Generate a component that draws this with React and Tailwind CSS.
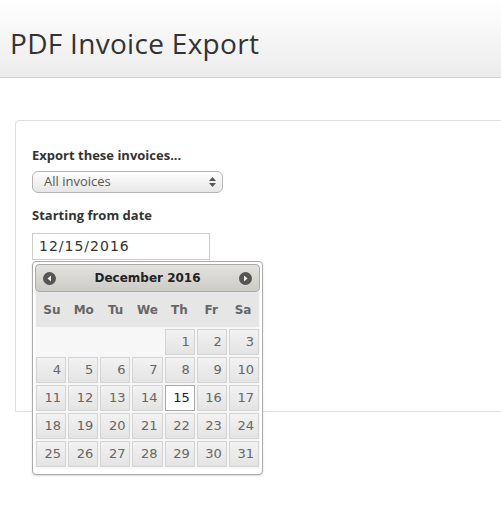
const weeks = [
  [null, null, null, null, 1, 2, 3],
  [4, 5, 6, 7, 8, 9, 10],
  [11, 12, 13, 14, 15, 16, 17],
  [18, 19, 20, 21, 22, 23, 24],
  [25, 26, 27, 28, 29, 30, 31],
];
const dayNames = ["Su", "Mo", "Tu", "We", "Th", "Fr", "Sa"];

function NavIcon({ dir }) {
  return (
    <svg width="13" height="13" viewBox="0 0 13 13">
      <circle cx="6.5" cy="6.5" r="6.5" fill="#555" />
      {dir === "prev" ? (
        <path d="M8 3.5 L4.5 6.5 L8 9.5 Z" fill="#eee" />
      ) : (
        <path d="M5 3.5 L8.5 6.5 L5 9.5 Z" fill="#eee" />
      )}
    </svg>
  );
}

function DatePicker() {
  return (
    <div className="absolute left-0 top-[28px] w-[231px] rounded-[4px] border border-[#aaa] bg-white p-[2px] pb-[5px] font-['DejaVu_Sans',Verdana,sans-serif] shadow-[0_1px_2px_rgba(0,0,0,0.15)]">
      <div className="flex h-[28px] items-center justify-between rounded-[4px] border border-[#aaa] bg-gradient-to-b from-[#e4e2de] to-[#cdcbc6] px-[7px]">
        <NavIcon dir="prev" />
        <span className="text-[12px] font-bold text-[#222]">December 2016</span>
        <NavIcon dir="next" />
      </div>
      <div className="bg-[#f7f7f7] px-[1px] pb-[2px]">
        <div className="grid h-[35px] grid-cols-7 items-center bg-[#e6e6e6] text-center text-[12px] font-bold text-[#666]">
          {dayNames.map((d) => (
            <span key={d}>{d}</span>
          ))}
        </div>
        <div className="mt-[2px] flex flex-col gap-[2px]">
          {weeks.map((week, i) => (
            <div key={i} className="grid grid-cols-7 gap-[2px]">
              {week.map((day, j) =>
                day === null ? (
                  <div key={j} className="h-[26px]" />
                ) : day === 15 ? (
                  <div
                    key={j}
                    className="flex h-[26px] items-center justify-end border border-[#aaa] bg-white pr-[4px] text-[13px] text-[#212121]"
                  >
                    {day}
                  </div>
                ) : (
                  <div
                    key={j}
                    className="flex h-[26px] items-center justify-end border border-[#d3d3d3] bg-gradient-to-b from-[#f2f2f2] to-[#e4e4e4] pr-[4px] text-[13px] text-[#666]"
                  >
                    {day}
                  </div>
                )
              )}
            </div>
          ))}
        </div>
      </div>
    </div>
  );
}

export default function App() {
  return (
    <div className="h-[519px] w-[501px] overflow-hidden bg-white font-['Open_Sans',sans-serif] text-[#333]">
      <div className="flex h-[78px] items-center border-b border-[#d0d0d0] bg-gradient-to-b from-white to-[#ececec] pl-[10px] pt-[8px]">
        <h1 className="text-[28px] tracking-[0.3px] text-[#333]">PDF Invoice Export</h1>
      </div>
      <div className="ml-[15px] mt-[42px] h-[292px] w-[520px] rounded-tl-[4px] border border-[#ddd] pl-[16px] pt-[25px]">
        <label className="block text-[13px] font-bold text-[#333]">Export these invoices...</label>
        <div className="mt-[5px] flex h-[22px] w-[191px] items-center justify-between rounded-[6px] border border-[#b5b5b5] bg-gradient-to-b from-white to-[#e6e6e6] pl-[11px] pr-[6px]">
          <span className="text-[13px] text-[#555]">All invoices</span>
          <svg width="7" height="10" viewBox="0 0 7 10">
            <path d="M3.5 0 L7 4 L0 4 Z M3.5 10 L7 6 L0 6 Z" fill="#555" />
          </svg>
        </div>
        <label className="mt-[13px] block text-[13px] font-bold text-[#333]">Starting from date</label>
        <div className="relative mt-[8px]">
          <div className="flex h-[27px] w-[178px] items-center border border-[#ccc] bg-white pl-[6px] font-['DejaVu_Sans',sans-serif] text-[14px] tracking-[1px] text-[#333]">
            12/15/2016
          </div>
          <DatePicker />
        </div>
      </div>
    </div>
  );
}
